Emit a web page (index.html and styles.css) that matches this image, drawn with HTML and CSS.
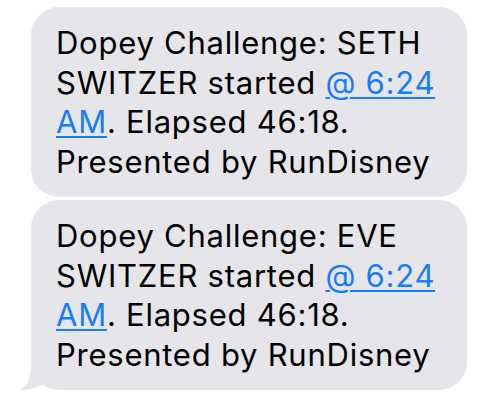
FILE: index.html
```html
<!DOCTYPE html>
<html>
<head>
<meta charset="utf-8">
<link rel="stylesheet" href="styles.css">
</head>
<body>
<div class="thread">
  <div class="bubble">Dopey Challenge: SETH SWITZER started <a class="link" href="#">@ 6:24</a> <a class="link" href="#">AM</a>. Elapsed 46:18. Presented by RunDisney</div>
  <div class="bubble">Dopey Challenge: EVE SWITZER started <a class="link" href="#">@ 6:24</a> <a class="link" href="#">AM</a>. Elapsed 46:18. Presented by RunDisney<svg class="tail" width="30" height="32" viewBox="0 0 30 32"><path d="M12 0 L12 10 C12 20 8 28 1 32 C9 32.3 18 30 26 25 L26 0 Z" fill="#e5e5ea"/></svg></div>
</div>
</body>
</html>
```
FILE: styles.css
```css
html, body {
  margin: 0;
  padding: 0;
  background: #ffffff;
}
.thread {
  display: flex;
  flex-direction: column;
  gap: 3px;
  padding: 7px 0 0 31px;
}
.bubble {
  position: relative;
  width: 436px;
  height: 190px;
  box-sizing: border-box;
  padding: 16px 14px 0 25px;
  background: #e5e5ea;
  border-radius: 28px;
  font-family: "Inter", "Noto Sans", sans-serif;
  font-size: 31px;
  letter-spacing: 0.75px;
  line-height: 39.5px;
  color: #000000;
}
.link {
  color: #147efb;
  text-decoration: underline;
  text-decoration-thickness: 2px;
  text-underline-offset: 3px;
}
.tail {
  position: absolute;
  left: -12px;
  bottom: 0;
  display: block;
}
```
